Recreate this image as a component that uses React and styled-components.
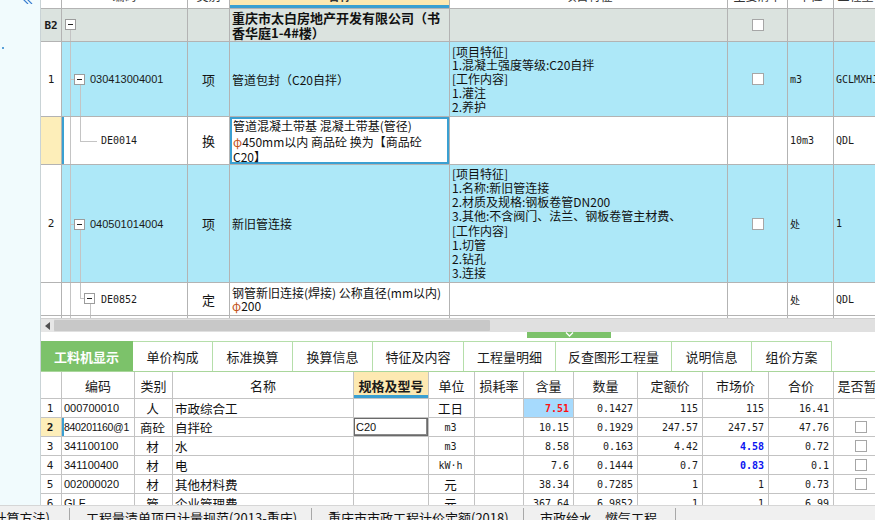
import styled, { createGlobalStyle, css } from "styled-components";

const GlobalStyle = createGlobalStyle`
  html, body { margin: 0; padding: 0; background: #ffffff; }
  body {
    font-family: "Noto Sans CJK SC", "Noto Sans", sans-serif;
    font-size: 12px;
    color: #141414;
  }
  * { box-sizing: border-box; }
`;

const mono = `"DejaVu Sans Mono", "Liberation Mono", "Noto Sans CJK SC", monospace`;
const upperCols = "21px 126px 42px 220px 278px 60px 46px 80px";
const lowerCols = "21px 73px 38px 181px 75px 46px 49px 50px 64px 65px 66px 65px 60px";

const BLUE_ROW = "#ade8f8";
const GRAY_ROW = "#dbe3df";
const YELLOW = "#fdeeb9";
const SEL_BLUE = "#3aa0d2";

const upperHead = ["编码", "类别", "名称", "项目特征", "主要清单", "单位", "工程量表达式"];

const upperRows = [
  {
    kind: "group", no: "B2", type: "", tone: GRAY_ROW, h: 33, check: true,
    name: ["重庆市太白房地产开发有限公司（书", "香华庭1-4#楼）"], feature: [], unit: "", expr: "",
  },
  {
    kind: "item", no: "1", code: "030413004001", type: "项", tone: BLUE_ROW, h: 75, check: true,
    name: ["管道包封（C20自拌）"],
    feature: ["[项目特征]", "1.混凝土强度等级:C20自拌", "[工作内容]", "1.灌注", "2.养护"],
    unit: "m3", expr: "GCLMXHJ",
  },
  {
    kind: "sub", no: "", code: "DE0014", type: "换", tone: "#ffffff", h: 48, selected: true,
    name: ["管道混凝土带基 混凝土带基(管径)", "φ450mm以内 商品砼  换为【商品砼", "C20】"],
    feature: [], unit: "10m3", expr: "QDL",
  },
  {
    kind: "item", no: "2", code: "040501014004", type: "项", tone: BLUE_ROW, h: 118, check: true,
    name: ["新旧管连接"],
    feature: [
      "[项目特征]", "1.名称:新旧管连接", "2.材质及规格:钢板卷管DN200",
      "3.其他:不含阀门、法兰、钢板卷管主材费、", "[工作内容]", "1.切管", "2.钻孔", "3.连接",
    ],
    unit: "处", expr: "1",
  },
  {
    kind: "subparent", no: "", code: "DE0852", type: "定", tone: "#ffffff", h: 33,
    name: ["钢管新旧连接(焊接) 公称直径(mm以内)", "φ200"], feature: [], unit: "处", expr: "QDL",
  },
];

const lowerHead = ["", "编码", "类别", "名称", "规格及型号", "单位", "损耗率", "含量", "数量", "定额价", "市场价", "合价", "是否暂估"];

const lowerRows = [
  { no: "1", code: "000700010", cat: "人", name: "市政综合工", spec: "", unit: "工日", qty: "7.51", num: "0.1427", base: "115", market: "115", total: "16.41", check: false, hotQty: true },
  { no: "2", code: "840201160@1", cat: "商砼", name: "自拌砼", spec: "C20", unit: "m3", qty: "10.15", num: "0.1929", base: "247.57", market: "247.57", total: "47.76", check: true, selected: true },
  { no: "3", code: "341100100", cat: "材", name: "水", spec: "", unit: "m3", qty: "8.58", num: "0.163", base: "4.42", market: "4.58", total: "0.72", check: true, hotMarket: true },
  { no: "4", code: "341100400", cat: "材", name: "电", spec: "", unit: "kW·h", qty: "7.6", num: "0.1444", base: "0.7", market: "0.83", total: "0.1", check: true, hotMarket: true },
  { no: "5", code: "002000020", cat: "材", name: "其他材料费", spec: "", unit: "元", qty: "38.34", num: "0.7285", base: "1", market: "1", total: "0.73", check: true },
  { no: "6", code: "GLF", cat: "管", name: "企业管理费", spec: "", unit: "元", qty: "367.64", num: "6.9852", base: "1", market: "1", total: "6.99", check: false },
];

const tabs = [
  { label: "工料机显示", w: 92, active: true },
  { label: "单价构成", w: 80 },
  { label: "标准换算", w: 80 },
  { label: "换算信息", w: 80 },
  { label: "特征及内容", w: 91 },
  { label: "工程量明细", w: 92 },
  { label: "反查图形工程量", w: 116 },
  { label: "说明信息", w: 80 },
  { label: "组价方案", w: 80 },
];

const statusItems = [
  { text: "(按清单计算方法)", w: 70, right: true },
  { text: "工程量清单项目计量规范(2013-重庆)", w: 242 },
  { text: "重庆市市政工程计价定额(2018)", w: 212 },
  { text: "市政给水、燃气工程", w: 152 },
];

function Tree({ kind }) {
  if (kind === "group") {
    return (
      <>
        <TreeBox $x={3} $y={10} />
        <TreeV $x={8} $top={21} />
      </>
    );
  }
  if (kind === "item") {
    return (
      <>
        <TreeV $x={8} $top={0} />
        <TreeH $x={8} $y="50%" $w={5} />
        <TreeBox $x={12} $y="calc(50% - 5px)" />
        <TreeV $x={18} $top="calc(50% + 6px)" />
      </>
    );
  }
  if (kind === "sub") {
    return (
      <>
        <TreeV $x={8} $top={0} />
        <TreeV $x={18} $top={0} $height={25} />
        <TreeH $x={18} $y={24} $w={17} />
      </>
    );
  }
  if (kind === "subparent") {
    return (
      <>
        <TreeV $x={8} $top={0} />
        <TreeV $x={18} $top={0} $height={15} />
        <TreeH $x={18} $y={15} $w={5} />
        <TreeBox $x={22} $y={10} />
        <TreeV $x={28} $top={21} />
      </>
    );
  }
  return (
    <>
      <TreeV $x={8} $top={0} />
      <TreeV $x={28} $top={0} />
    </>
  );
}

function PhiText({ text }) {
  const parts = text.split("φ");
  return parts.map((p, i) => (
    <span key={i}>
      {i > 0 && <Phi>φ</Phi>}
      {p}
    </span>
  ));
}

export default function App() {
  return (
    <Page>
      <GlobalStyle />
      <Workspace>
        <SidePane>
          <svg width="10" height="8" viewBox="0 0 10 8">
            <polyline points="5,0 1,4 5,8" fill="none" stroke="#3a7fd0" strokeWidth="1.2" />
            <polyline points="9,0 5,4 9,8" fill="none" stroke="#3a7fd0" strokeWidth="1.2" />
          </svg>
          <SideDot />
        </SidePane>
        <MainPane>
          <UpperGrid>
            <URow $h={26} $head>
              <UCell />
              {upperHead.map((t, i) => (
                <UCell key={t} $align="center" $headSel={i === 2}>{t}</UCell>
              ))}
            </URow>
            {upperRows.map((r, idx) => (
              <URow key={idx} $h={r.h} $tone={r.tone}>
                <UCell
                  $align="center"
                  $bg={r.kind === "group" ? GRAY_ROW : r.selected ? YELLOW : "#ffffff"}
                >
                  <RowNo $bold={r.kind === "group"}>{r.no}</RowNo>
                </UCell>
                <CodeCell $selected={r.selected}>
                  <Tree kind={r.kind} />
                  {r.code && (
                    <CodeText $mono={r.kind !== "item"} $pad={r.kind === "item" ? 28 : 39}>
                      {r.code}
                    </CodeText>
                  )}
                </CodeCell>
                <UCell $align="center">
                  <TypeText>{r.type}</TypeText>
                </UCell>
                <UCell $editing={r.selected} $top={r.selected}>
                  <Lines $lh={r.kind === "group" ? 15 : r.selected ? 15.5 : 13} $bold={r.kind === "group"}>
                    {r.name.map((l) => (
                      <div key={l}><PhiText text={l} /></div>
                    ))}
                  </Lines>
                </UCell>
                <UCell>
                  <Lines $lh={r.feature.length > 5 ? 14.2 : 13.8}>
                    {r.feature.map((l) => (
                      <div key={l}>{l}</div>
                    ))}
                  </Lines>
                </UCell>
                <UCell $align="center">{r.check && <Check />}</UCell>
                <UCell>
                  <MonoText>{r.unit}</MonoText>
                </UCell>
                <UCell>
                  <MonoText>{r.expr}</MonoText>
                </UCell>
              </URow>
            ))}
            <URow $h={20} $tone="#ffffff">
              <UCell />
              <CodeCell>
                <Tree kind="tail" />
              </CodeCell>
              <UCell />
              <UCell />
              <UCell />
              <UCell />
              <UCell />
              <UCell />
            </URow>
          </UpperGrid>

          <HScroll>
            <ScrollArrow>
              <svg width="5" height="8" viewBox="0 0 5 8">
                <polygon points="5,0 0,4 5,8" fill="#505050" />
              </svg>
            </ScrollArrow>
            <ScrollThumb />
          </HScroll>

          <Splitter>
            <SplitHandle>
              <svg width="9" height="5" viewBox="0 0 9 5">
                <polyline points="1,0.5 4.5,4 8,0.5" fill="none" stroke="#ffffff" strokeWidth="1.3" />
              </svg>
            </SplitHandle>
          </Splitter>

          <TabBar>
            {tabs.map((t) => (
              <Tab key={t.label} $w={t.w} $active={t.active}>
                {t.label}
              </Tab>
            ))}
          </TabBar>

          <LowerGrid>
            <LRow $h={27}>
              {lowerHead.map((t, i) => (
                <LHead key={i} $spec={i === 4}>{t}</LHead>
              ))}
            </LRow>
            {lowerRows.map((r) => (
              <LRow key={r.no} $h={19}>
                <LCell $align="center" $bg={r.selected ? YELLOW : "#ffffff"}>
                  <RowNo $bold={r.selected}>{r.no}</RowNo>
                </LCell>
                <LCell $selected={r.selected}>
                  <SansNum $tight={r.code.length > 9}>{r.code}</SansNum>
                </LCell>
                <LCell $align="center">{r.cat}</LCell>
                <LCell>{r.name}</LCell>
                <LCell $editBox={r.selected}>
                  <SansNum>{r.spec}</SansNum>
                </LCell>
                <LCell $align="center">
                  {/[a-zA-Z]/.test(r.unit) ? <MonoText>{r.unit}</MonoText> : r.unit}
                </LCell>
                <LCell />
                <LCell $align="right" $bg={r.hotQty ? "#a6dafd" : undefined}>
                  <Num $color={r.hotQty ? "#ff1010" : undefined} $bold={r.hotQty}>{r.qty}</Num>
                </LCell>
                <LCell $align="right"><Num>{r.num}</Num></LCell>
                <LCell $align="right"><Num>{r.base}</Num></LCell>
                <LCell $align="right">
                  <Num $color={r.hotMarket ? "#0a14f0" : undefined} $bold={r.hotMarket}>{r.market}</Num>
                </LCell>
                <LCell $align="right"><Num>{r.total}</Num></LCell>
                <LCell $pad={21}>{r.check && <Check />}</LCell>
              </LRow>
            ))}
          </LowerGrid>
        </MainPane>
      </Workspace>

      <StatusBar>
        {statusItems.map((s) => (
          <StatusItem key={s.text} $w={s.w} $right={s.right}>
            {s.text}
          </StatusItem>
        ))}
      </StatusBar>
    </Page>
  );
}

const Page = styled.div`
  width: 875px;
  height: 520px;
  overflow: hidden;
  display: flex;
  flex-direction: column;
`;

const Workspace = styled.div`
  display: flex;
  height: 505px;
  flex-shrink: 0;
`;

const SidePane = styled.div`
  width: 41px;
  flex-shrink: 0;
  background: #f1fbfd;
  border-right: 1px solid #c9d3d6;
  padding-left: 23px;
  svg {
    display: block;
    margin-top: -4px;
  }
`;

const SideDot = styled.div`
  width: 2px;
  height: 2px;
  background: #5aa0d8;
  margin: 43px 0 0 -21px;
`;

const MainPane = styled.div`
  flex: 1;
  min-width: 0;
  display: flex;
  flex-direction: column;
  overflow: hidden;
`;

const UpperGrid = styled.div`
  height: 318px;
  flex-shrink: 0;
  overflow: hidden;
  display: flex;
  flex-direction: column;
`;

const URow = styled.div`
  display: grid;
  grid-template-columns: ${upperCols};
  height: ${(p) => p.$h}px;
  flex-shrink: 0;
  background: ${(p) => p.$tone || "#ffffff"};
  ${(p) =>
    p.$head &&
    css`
      margin-top: -17px;
      color: #333;
    `}
`;

const UCell = styled.div`
  position: relative;
  display: flex;
  align-items: ${(p) => (p.$top ? "flex-start" : "center")};
  justify-content: ${(p) => (p.$align === "center" ? "center" : "flex-start")};
  padding: ${(p) => (p.$top ? "1px 3px" : "0 2px")};
  border-right: 1px solid #b3b3b3;
  border-bottom: 1px solid #b3b3b3;
  overflow: hidden;
  white-space: nowrap;
  ${(p) => p.$bg && css`background: ${p.$bg};`}
  ${(p) =>
    p.$headSel &&
    css`
      background: #fde9b2;
      box-shadow: inset 0 -3px 0 ${SEL_BLUE};
      font-weight: 700;
    `}
  ${(p) =>
    p.$editing &&
    css`
      box-shadow: inset 0 0 0 2px ${SEL_BLUE};
      background: #ffffff;
    `}
`;

const CodeCell = styled(UCell)`
  ${(p) => p.$selected && css`box-shadow: inset 2px 0 0 ${SEL_BLUE};`}
`;

const RowNo = styled.span`
  font-family: ${mono};
  font-size: 11px;
  font-weight: ${(p) => (p.$bold ? 700 : 400)};
  color: #1a1a1a;
`;

const CodeText = styled.span`
  padding-left: ${(p) => p.$pad - 2}px;
  font-family: ${(p) => (p.$mono ? mono : `"Liberation Sans", Arial, sans-serif`)};
  font-size: ${(p) => (p.$mono ? "10px" : "11px")};
  color: #1a1a1a;
`;

const TypeText = styled.span`
  font-size: 13px;
`;

const Lines = styled.div`
  line-height: ${(p) => p.$lh}px;
  font-size: ${(p) => (p.$bold ? "13px" : "12px")};
  font-weight: ${(p) => (p.$bold ? 700 : 400)};
  color: #111;
`;

const Phi = styled.span`
  color: #c2561a;
`;

const MonoText = styled.span`
  font-family: ${mono};
  font-size: 10px;
  color: #1a1a1a;
`;

const Check = styled.span`
  display: inline-block;
  width: 12px;
  height: 12px;
  background: #ffffff;
  border: 1px solid #a6a6a6;
`;

const TreeV = styled.span`
  position: absolute;
  left: ${(p) => p.$x}px;
  top: ${(p) => (typeof p.$top === "number" ? `${p.$top}px` : p.$top)};
  ${(p) => (p.$height ? css`height: ${p.$height}px;` : css`bottom: -1px;`)}
  width: 1px;
  background: #c4c4c4;
`;

const TreeH = styled.span`
  position: absolute;
  left: ${(p) => p.$x}px;
  top: ${(p) => (typeof p.$y === "number" ? `${p.$y}px` : p.$y)};
  width: ${(p) => p.$w}px;
  height: 1px;
  background: #c4c4c4;
`;

const TreeBox = styled.span`
  position: absolute;
  left: ${(p) => p.$x}px;
  top: ${(p) => (typeof p.$y === "number" ? `${p.$y}px` : p.$y)};
  width: 11px;
  height: 11px;
  border: 1px solid #9c9c9c;
  background: #ffffff;
  &::after {
    content: "";
    position: absolute;
    left: 2px;
    top: 4px;
    width: 5px;
    height: 1px;
    background: #222;
  }
`;

const HScroll = styled.div`
  display: flex;
  height: 14px;
  flex-shrink: 0;
  background: #e0e0e0;
  border-top: 1px solid #d0d0d0;
`;

const ScrollArrow = styled.div`
  width: 13px;
  display: flex;
  align-items: center;
  justify-content: center;
  background: #e6e6e6;
`;

const ScrollThumb = styled.div`
  width: 436px;
  margin: 1px 0;
  background: #c8c8c8;
  border-radius: 1px;
`;

const Splitter = styled.div`
  height: 9px;
  flex-shrink: 0;
  padding-left: 486px;
`;

const SplitHandle = styled.div`
  width: 84px;
  height: 6px;
  background: #7cc26a;
  display: flex;
  justify-content: center;
  align-items: flex-start;
  svg {
    display: block;
  }
`;

const TabBar = styled.div`
  display: flex;
  height: 31px;
  flex-shrink: 0;
  border-bottom: 1px solid #a9d69b;
`;

const Tab = styled.div`
  width: ${(p) => p.$w}px;
  flex-shrink: 0;
  display: flex;
  align-items: center;
  justify-content: center;
  font-size: 13px;
  color: #1c1c1c;
  border-top: 1px solid #b5deaa;
  border-right: 1px solid #b5deaa;
  ${(p) =>
    p.$active &&
    css`
      background: #7cc26a;
      border-color: #7cc26a;
      color: #ffffff;
      font-weight: 700;
    `}
`;

const LowerGrid = styled.div`
  flex: 1;
  min-height: 0;
  overflow: hidden;
  display: flex;
  flex-direction: column;
`;

const LRow = styled.div`
  display: grid;
  grid-template-columns: ${lowerCols};
  height: ${(p) => p.$h}px;
  flex-shrink: 0;
`;

const LHead = styled.div`
  display: flex;
  align-items: center;
  justify-content: center;
  font-size: 13px;
  color: #1a1a1a;
  border-right: 1px solid #c3c3c3;
  border-bottom: 1px solid #c3c3c3;
  white-space: nowrap;
  overflow: hidden;
  ${(p) =>
    p.$spec &&
    css`
      background: #fde9b2;
      font-weight: 700;
      box-shadow: inset 0 -3px 0 ${SEL_BLUE};
    `}
`;

const LCell = styled.div`
  display: flex;
  align-items: center;
  justify-content: ${(p) =>
    p.$align === "center" ? "center" : p.$align === "right" ? "flex-end" : "flex-start"};
  padding: ${(p) => (p.$pad ? `0 0 0 ${p.$pad}px` : "0 4px 0 2px")};
  font-size: 12.5px;
  color: #111;
  border-right: 1px solid #c3c3c3;
  border-bottom: 1px solid #c3c3c3;
  white-space: nowrap;
  overflow: hidden;
  background: ${(p) => p.$bg || "#ffffff"};
  ${(p) => p.$selected && css`box-shadow: inset 2px 0 0 ${SEL_BLUE};`}
  ${(p) => p.$editBox && css`box-shadow: inset 0 0 0 1px #6a6a6a, inset -1px -1px 0 1px #8a8a8a;`}
`;

const SansNum = styled.span`
  font-family: "Liberation Sans", Arial, sans-serif;
  font-size: ${(p) => (p.$tight ? "10.5px" : "11px")};
  letter-spacing: ${(p) => (p.$tight ? "-0.3px" : "0")};
`;

const Num = styled.span`
  font-family: ${mono};
  font-size: 10px;
  font-weight: ${(p) => (p.$bold ? 700 : 400)};
  color: ${(p) => p.$color || "#1a1a1a"};
`;

const StatusBar = styled.div`
  display: flex;
  height: 22px;
  flex-shrink: 0;
  background: #f0f0f0;
  border-top: 1px solid #d6d6d6;
  padding-top: 2px;
`;

const StatusItem = styled.div`
  width: ${(p) => p.$w}px;
  flex-shrink: 0;
  display: flex;
  align-items: center;
  justify-content: ${(p) => (p.$right ? "flex-end" : "flex-start")};
  padding: ${(p) => (p.$right ? "0 19px 0 0" : "0 0 0 16px")};
  font-size: 13px;
  color: #111;
  white-space: nowrap;
  overflow: hidden;
  border-right: 1px solid #a8a8a8;
`;
